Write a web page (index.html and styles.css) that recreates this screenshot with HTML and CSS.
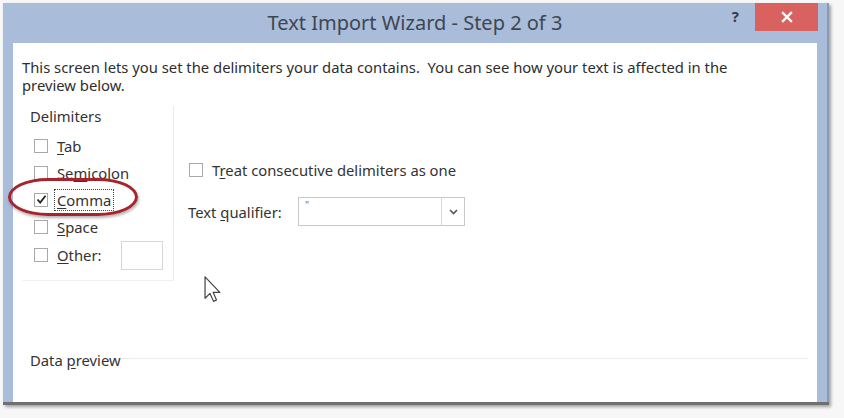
FILE: index.html
```html
<!DOCTYPE html>
<html>
<head>
<meta charset="utf-8">
<link rel="stylesheet" href="styles.css">
</head>
<body>
<div class="window">
  <div class="titlebar">
    <div class="tb-side"></div>
    <div class="title">Text Import Wizard - Step 2 of 3</div>
    <div class="tb-side tb-right">
      <span class="help">?</span>
      <span class="close">
        <svg width="12" height="12" viewBox="0 0 12 12"><path d="M2 2 L10 10 M10 2 L2 10" stroke="#fff" stroke-width="2.4" stroke-linecap="square"/></svg>
      </span>
    </div>
  </div>
  <div class="client">
    <p class="intro">This screen lets you set the delimiters your data contains.&nbsp; You can see how your text is affected in the preview below.</p>
    <div class="main">
      <div class="group">
        <div class="group-label">Delimiters</div>
        <div class="opts">
          <div class="opt"><span class="cb"></span><span class="lbl"><u>T</u>ab</span></div>
          <div class="opt"><span class="cb"></span><span class="lbl">Se<u>m</u>icolon</span></div>
          <div class="opt"><span class="cb">
            <svg width="11" height="11" viewBox="0 0 11 11"><path d="M1.5 5.5 L4.2 8.5 L9.5 1.8" fill="none" stroke="#222" stroke-width="1.8"/></svg>
          </span><span class="lbl focus"><u>C</u>omma</span></div>
          <div class="opt"><span class="cb"></span><span class="lbl"><u>S</u>pace</span></div>
          <div class="opt opt-other"><span class="cb"></span><span class="lbl"><u>O</u>ther:</span><span class="other-input"></span></div>
        </div>
      </div>
      <div class="right">
        <div class="opt treat"><span class="cb"></span><span class="lbl">T<u>r</u>eat consecutive delimiters as one</span></div>
        <div class="qual-row">
          <span class="qual-lbl">Text <u>q</u>ualifier:</span>
          <div class="combo">
            <span class="combo-val">"</span>
            <span class="combo-btn">
              <svg width="9" height="6" viewBox="0 0 9 6"><path d="M1 1 L4.5 4.5 L8 1" fill="none" stroke="#555" stroke-width="1.6"/></svg>
            </span>
          </div>
        </div>
      </div>
    </div>
    <div class="preview">
      <span class="preview-lbl">Data <u>p</u>review</span>
      <span class="preview-line"></span>
    </div>
    <div class="annot"></div>
    <svg class="cursor" width="18" height="27" viewBox="0 0 13 20">
      <path d="M0.6 0.6 L0.6 16.5 L4.3 12.9 L6.9 18.8 L9.1 17.8 L6.6 12.1 L11.6 12.1 Z" fill="#fff" stroke="#444" stroke-width="0.9" stroke-linejoin="round"/>
    </svg>
  </div>
</div>
</body>
</html>
```

FILE: styles.css
```css
html, body {
  margin: 0;
  padding: 0;
}
body {
  background: #f7f7f7;
  font-family: "Noto Sans", "Open Sans", sans-serif;
  color: #333;
  width: 844px;
  height: 418px;
  overflow: hidden;
}
u {
  text-decoration: underline;
  text-underline-offset: 2px;
}
.window {
  margin: 3px 0 0 3px;
  width: 804px;
  height: 399px;
  padding: 0 12px 0 10px;
  background: #a9bcda;
  border-bottom: 3px solid #6f6f70;
  box-shadow: 2px 2px 3px rgba(0, 0, 0, 0.35), inset -2px 0 0 #8a9ab3;
  display: flex;
  flex-direction: column;
}
.titlebar {
  height: 40px;
  display: grid;
  grid-template-columns: 1fr auto 1fr;
  align-items: center;
}
.title {
  font-size: 20px;
  color: #3f4650;
  padding-bottom: 1px;
}
.tb-right {
  display: flex;
  justify-content: flex-end;
  align-self: start;
  align-items: flex-start;
  margin-right: -1px;
}
.help {
  font-weight: bold;
  font-size: 15px;
  color: #2f3b4e;
  margin-top: 3px;
  margin-right: 16px;
}
.close {
  width: 63px;
  height: 28px;
  background: #d9615f;
  display: flex;
  align-items: center;
  justify-content: center;
}
.client {
  position: relative;
  flex: 1;
  background: #fff;
  padding: 15px 9px 0 9px;
  font-size: 14.8px;
}
.intro {
  margin: 0;
  line-height: 18px;
  width: 745px;
  color: #2e2e2e;
}
.main {
  display: flex;
  margin-top: 12px;
}
.group {
  width: 151px;
  height: 172px;
  padding-top: 2px;
  border-right: 1px solid #ececec;
  border-bottom: 1px solid #f0f0f0;
}
.group-label {
  line-height: 16px;
  margin-left: 8px;
  color: #333;
}
.opts {
  margin-top: 8px;
  margin-left: 12px;
}
.opt {
  display: flex;
  align-items: center;
  height: 27px;
}
.opt-other {
  height: 30px;
}
.cb {
  width: 14px;
  height: 14px;
  border: 1px solid #a9a9a9;
  box-sizing: border-box;
  background: #fff;
  display: flex;
  align-items: center;
  justify-content: center;
  flex: none;
}
.lbl {
  margin-left: 9px;
  line-height: 16px;
  color: #333;
}
.opt-other .lbl {
  width: 54px;
}
.focus {
  outline: 1px dotted #444;
  outline-offset: 2px;
}
.other-input {
  width: 40px;
  height: 27px;
  border: 1px solid #d6d6d6;
  margin-left: 10px;
}
.right {
  margin-left: 14px;
  padding-top: 54px;
}
.treat {
  height: 20px;
  margin-left: 1px;
}
.qual-row {
  display: flex;
  align-items: center;
  margin-top: 17px;
}
.qual-lbl {
  width: 110px;
  color: #333;
}
.combo {
  width: 167px;
  height: 29px;
  border: 1px solid #c8c8c8;
  box-sizing: border-box;
  display: flex;
}
.combo-val {
  flex: 1;
  padding-left: 6px;
  font-size: 10px;
  line-height: 14px;
  color: #777;
}
.combo-btn {
  width: 22px;
  border-left: 1px solid #d8d8d8;
  display: flex;
  align-items: center;
  justify-content: center;
}
.preview {
  display: flex;
  margin-top: 71px;
}
.preview-lbl {
  margin-left: 8px;
  line-height: 16px;
  color: #333;
}
.preview-line {
  flex: 1;
  height: 0;
  border-top: 1px solid #ececec;
  margin-top: 6px;
  margin-left: 1px;
}
.annot {
  position: absolute;
  left: -5px;
  top: 135px;
  width: 124px;
  height: 32px;
  border: 3px solid #a8242c;
  border-radius: 40px / 19px;
  box-shadow: 1px 2px 3px rgba(0, 0, 0, 0.3);
}
.cursor {
  position: absolute;
  left: 191px;
  top: 233px;
}
```
